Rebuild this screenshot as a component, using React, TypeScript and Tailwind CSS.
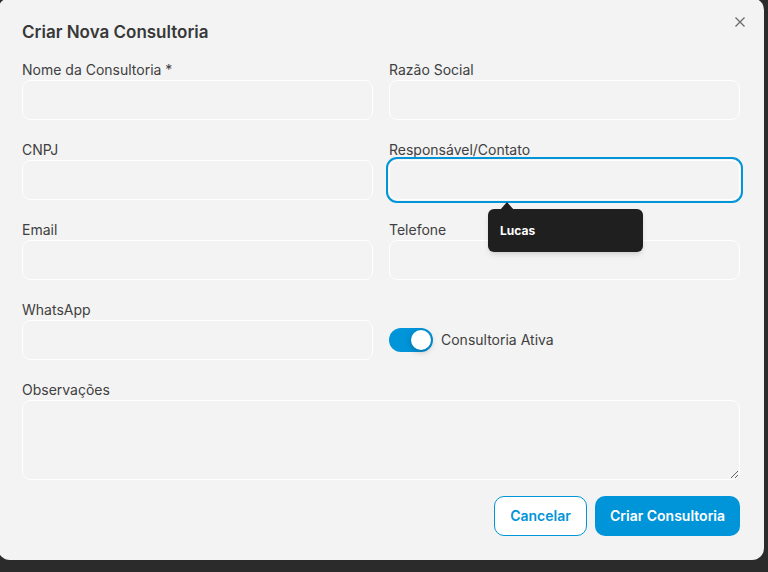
import React, { useState } from 'react';

const fieldCls =
  'w-full h-10 rounded-lg border border-white bg-[#f3f3f3] px-3 text-sm text-[#333] outline-none';

function Field({ label, focused }: { label: string; focused?: boolean }) {
  return (
    <div className="flex flex-col">
      <label className="text-sm leading-5 text-[#404040]">{label}</label>
      <input
        className={
          focused
            ? `${fieldCls} outline-2 outline-offset-1 outline-solid outline-[#0094d9]`
            : fieldCls
        }
      />
    </div>
  );
}

export default function App() {
  const [active, setActive] = useState(true);

  return (
    <div
      className="w-[768px] h-[572px] overflow-hidden bg-[#2b2b2b]"
      style={{ fontFamily: 'Inter, "Noto Sans", sans-serif' }}
    >
      <div className="relative -mt-[2px] -ml-[2px] w-[766px] h-[562px] rounded-xl bg-[#f3f3f3] px-6 pt-[22px]">
        <button className="absolute right-[19px] top-[19px] text-[#6b6b6b]">
          <svg width="10" height="10" viewBox="0 0 10 10" fill="none" stroke="currentColor" strokeWidth="1.3">
            <path d="M0.5 0.5l9 9M9.5 0.5l-9 9" />
          </svg>
        </button>

        <h2 className="text-[17px] leading-6 font-semibold text-[#383838]">Criar Nova Consultoria</h2>

        <div className="mt-4 grid grid-cols-2 gap-x-4 gap-y-5">
          <Field label="Nome da Consultoria *" />
          <Field label="Razão Social" />
          <Field label="CNPJ" />
          <div className="relative">
            <Field label="Responsável/Contato" focused />
            <div className="absolute left-[99px] top-[69px] w-[155px] h-[43px] rounded-md bg-[#1f1f1f] shadow-md z-10 flex items-center px-3">
              <span className="absolute -top-[7px] left-[12px] w-0 h-0 border-x-[7px] border-x-transparent border-b-[8px] border-b-[#1f1f1f]" />
              <span className="text-xs font-bold text-white">Lucas</span>
            </div>
          </div>
          <Field label="Email" />
          <Field label="Telefone" />
          <Field label="WhatsApp" />
          <div className="flex items-end h-full">
            <div className="flex items-center h-10 gap-2">
              <button
                onClick={() => setActive(!active)}
                className={`relative w-11 h-6 rounded-full ${active ? 'bg-[#0094d9]' : 'bg-[#ccc]'}`}
              >
                <span
                  className={`absolute top-[2px] w-5 h-5 rounded-full bg-white shadow-[0_2px_6px_rgba(0,0,0,0.25)] ${
                    active ? 'left-[22px]' : 'left-[2px]'
                  }`}
                />
              </button>
              <span className="text-sm text-[#404040]">Consultoria Ativa</span>
            </div>
          </div>
        </div>

        <div className="mt-5 flex flex-col">
          <label className="text-sm leading-5 text-[#404040]">Observações</label>
          <textarea className="w-full h-20 rounded-lg border border-white bg-[#f3f3f3] px-3 py-2 text-sm outline-none" />
        </div>

        <div className="mt-4 flex justify-end gap-2">
          <button className="h-10 w-[93px] rounded-[10px] border border-[#0094d9] bg-white text-sm font-semibold text-[#0094d9]">
            Cancelar
          </button>
          <button className="h-10 w-[145px] rounded-[10px] bg-[#0094d9] text-sm font-semibold text-white">
            Criar Consultoria
          </button>
        </div>
      </div>
    </div>
  );
}
